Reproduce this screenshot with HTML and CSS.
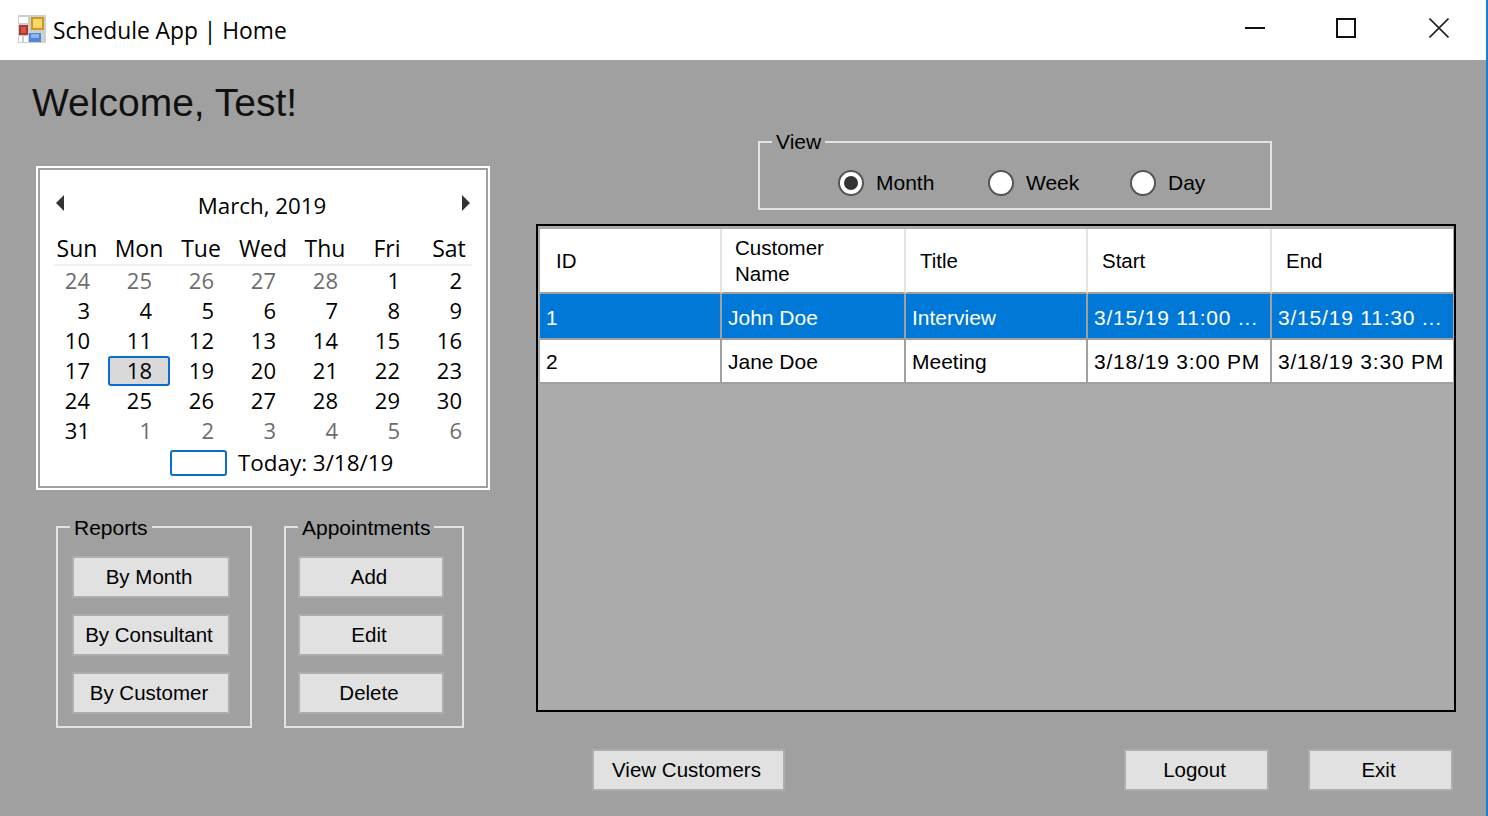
FILE: index.html
```html
<!DOCTYPE html>
<html lang="en">
<head>
  <meta charset="UTF-8">
  <meta name="viewport" content="width=device-width, initial-scale=1.0">
  <title>Schedule App | Home</title>
  <link rel="stylesheet" href="styles.css">
</head>
<body>
  <div class="window">
    <header class="titlebar">
      <svg class="app-icon" width="28" height="28" viewBox="0 0 28 28">
        <rect width="28" height="28" fill="#cfcfcf"/>
        <rect x="1" y="2" width="9" height="6" fill="#fff"/>
        <rect x="1" y="10" width="9" height="10" fill="#a83a32"/>
        <rect x="3" y="12" width="5" height="6" fill="#d8554c"/>
        <rect x="1" y="21" width="3" height="6" fill="#fff"/>
        <rect x="6" y="21" width="4" height="6" fill="#fff"/>
        <rect x="13" y="2" width="13" height="13" fill="#c99a1c"/>
        <rect x="15" y="4" width="9" height="9" fill="#f7d76a"/>
        <rect x="11" y="18" width="12" height="9" fill="#4f86d8"/>
        <rect x="13" y="19" width="8" height="4" fill="#8db4ee"/>
      </svg>
      <span class="app-title">Schedule App | Home</span>
      <div class="win-controls">
        <svg width="20" height="20" viewBox="0 0 20 20"><rect y="9" width="20" height="2" fill="#111"/></svg>
        <svg width="20" height="20" viewBox="0 0 20 20"><rect x="1" y="1" width="18" height="18" fill="none" stroke="#111" stroke-width="2"/></svg>
        <svg width="20" height="20" viewBox="0 0 20 20"><path d="M0.5 0.5L19.5 19.5M19.5 0.5L0.5 19.5" fill="none" stroke="#222" stroke-width="1.6"/></svg>
      </div>
    </header>

    <main class="client">
      <h1 class="welcome">Welcome, Test!</h1>
      <div class="columns">
        <section class="left-col">
          <div class="calendar">
            <div class="cal-inner">
              <div class="cal-nav">
                <span class="arrow arrow-left"></span>
                <span class="cal-month">March, 2019</span>
                <span class="arrow arrow-right"></span>
              </div>
              <div class="cal-head">
                <div class="cal-weekdays">
                  <span>Sun</span><span>Mon</span><span>Tue</span><span>Wed</span><span>Thu</span><span>Fri</span><span>Sat</span>
                </div>
              </div>
              <div class="cal-days">
                <span class="muted">24</span><span class="muted">25</span><span class="muted">26</span><span class="muted">27</span><span class="muted">28</span><span>1</span><span>2</span>
                <span>3</span><span>4</span><span>5</span><span>6</span><span>7</span><span>8</span><span>9</span>
                <span>10</span><span>11</span><span>12</span><span>13</span><span>14</span><span>15</span><span>16</span>
                <span>17</span><span class="selected">18</span><span>19</span><span>20</span><span>21</span><span>22</span><span>23</span>
                <span>24</span><span>25</span><span>26</span><span>27</span><span>28</span><span>29</span><span>30</span>
                <span>31</span><span class="muted">1</span><span class="muted">2</span><span class="muted">3</span><span class="muted">4</span><span class="muted">5</span><span class="muted">6</span>
              </div>
              <div class="cal-today">
                <span class="today-box"></span>
                <span class="today-text">Today: 3/18/19</span>
              </div>
            </div>
          </div>

          <div class="groups">
            <fieldset class="group group-reports">
              <legend>Reports</legend>
              <button class="btn">By Month</button>
              <button class="btn">By Consultant</button>
              <button class="btn">By Customer</button>
            </fieldset>
            <fieldset class="group group-appts">
              <legend>Appointments</legend>
              <button class="btn">Add</button>
              <button class="btn">Edit</button>
              <button class="btn">Delete</button>
            </fieldset>
          </div>
        </section>

        <section class="right-col">
          <fieldset class="group group-view">
            <legend>View</legend>
            <div class="radios">
              <label class="radio"><span class="dot checked"></span>Month</label>
              <label class="radio"><span class="dot"></span>Week</label>
              <label class="radio"><span class="dot"></span>Day</label>
            </div>
          </fieldset>

          <div class="grid-box">
            <table class="appts">
              <thead>
                <tr>
                  <th>ID</th>
                  <th>Customer<br>Name</th>
                  <th>Title</th>
                  <th>Start</th>
                  <th>End</th>
                </tr>
              </thead>
              <tbody>
                <tr class="active">
                  <td>1</td>
                  <td>John Doe</td>
                  <td>Interview</td>
                  <td class="date">3/15/19 11:00 ...</td>
                  <td class="date">3/15/19 11:30 ...</td>
                </tr>
                <tr>
                  <td>2</td>
                  <td>Jane Doe</td>
                  <td>Meeting</td>
                  <td class="date">3/18/19 3:00 PM</td>
                  <td class="date">3/18/19 3:30 PM</td>
                </tr>
              </tbody>
            </table>
          </div>

          <div class="bottom-bar">
            <button class="btn btn-customers">View Customers</button>
            <button class="btn btn-logout">Logout</button>
            <button class="btn btn-exit">Exit</button>
          </div>
        </section>
      </div>
    </main>
  </div>
</body>
</html>
```

FILE: styles.css
```css
* {
  margin: 0;
  padding: 0;
  box-sizing: border-box;
}

body {
  width: 1488px;
  height: 816px;
  overflow: hidden;
  font-family: "Liberation Sans", Arial, sans-serif;
  font-size: 21px;
  color: #000;
  background: #a0a0a0;
}

.window {
  display: flex;
  flex-direction: column;
  height: 816px;
  border-right: 2px solid #1a7fd4;
}

/* title bar */
.titlebar {
  display: flex;
  align-items: center;
  height: 60px;
  padding: 0 37px 0 18px;
  background: #fff;
}

.app-icon {
  margin-bottom: 2px;
}

.app-title {
  margin-left: 7px;
  font-family: "Open Sans", sans-serif;
  font-size: 22.8px;
}

.win-controls {
  display: flex;
  gap: 71px;
  margin-left: auto;
  margin-bottom: 4px;
}

.win-controls svg:last-child {
  margin-left: 2px;
}

/* client area */
.client {
  flex: 1;
  padding-top: 22px;
}

.welcome {
  height: 42px;
  margin: 0 0 6px 32px;
  font-size: 39px;
  font-weight: normal;
  line-height: 42px;
  color: #111;
}

.columns {
  display: flex;
}

.left-col {
  width: 536px;
  padding: 36px 0 0 36px;
}

.right-col {
  width: 920px;
}

/* calendar */
.calendar {
  width: 454px;
  height: 324px;
  border: 2px solid #fff;
  background: #fff;
  font-family: "Open Sans", sans-serif;
  font-size: 22px;
}

.cal-inner {
  height: 320px;
  padding: 0 6px;
  border: 2px solid #a0a0a0;
}

.cal-nav {
  display: flex;
  align-items: center;
  justify-content: space-between;
  height: 44px;
  margin: 12px 0 8px;
  padding: 0 10px;
}

.arrow {
  width: 0;
  height: 0;
  margin-bottom: 2px;
  border-top: 8px solid transparent;
  border-bottom: 8px solid transparent;
}

.arrow-left {
  border-right: 8px solid #333;
}

.arrow-right {
  border-left: 8px solid #333;
}

.cal-month {
  margin: 2px 2px 0 0;
  font-size: 22.3px;
}

.cal-head {
  margin: 0 8px;
  border-bottom: 2px solid #f0f0f0;
}

.cal-weekdays {
  display: grid;
  grid-template-columns: repeat(7, 62px);
  height: 30px;
  margin: 0 -8px;
  font-size: 23px;
  line-height: 28px;
  text-align: center;
}

.cal-days {
  display: grid;
  grid-template-columns: repeat(7, 62px);
  grid-auto-rows: 30px;
  line-height: 28px;
  text-align: right;
}

.cal-days span {
  padding-right: 18px;
}

.cal-days .muted {
  color: #6d6d6d;
}

.cal-days .selected {
  padding-right: 16px;
  line-height: 24px;
  border: 2px solid #0a6cd0;
  border-radius: 3px;
  background: #d9d9d9;
}

.cal-today {
  display: flex;
  align-items: center;
  gap: 11px;
  height: 26px;
  margin: 4px 0 0 124px;
}

.today-box {
  width: 57px;
  height: 26px;
  border: 2px solid #0a6cd0;
  border-radius: 3px;
}

.today-text {
  margin-bottom: 2px;
  font-size: 22.4px;
}

/* group boxes */
.groups {
  display: flex;
  gap: 32px;
  margin: 25px 0 0 20px;
}

.group {
  border: 2px solid #e3e3e3;
  min-width: 0;
}

.group legend {
  height: 24px;
  padding: 0 4px;
  line-height: 24px;
}

.group-reports {
  display: flex;
  flex-direction: column;
  gap: 16px;
  width: 196px;
  padding: 17px 20px 12px 14px;
}

.group-reports legend {
  margin-left: -2px;
  line-height: 26px;
}

.group-appts {
  display: flex;
  flex-direction: column;
  gap: 16px;
  width: 180px;
  padding: 17px 18px 12px 12px;
}

.group-appts legend {
  line-height: 26px;
}

.group-view {
  width: 514px;
  height: 80px;
  margin-left: 222px;
  padding: 16px 0 0 12px;
}

.radios {
  display: grid;
  grid-template-columns: 150px 142px auto;
  margin-left: 66px;
}

.radio {
  display: flex;
  align-items: center;
  gap: 12px;
  height: 26px;
}

.dot {
  display: flex;
  align-items: center;
  justify-content: center;
  width: 26px;
  height: 26px;
  border: 2px solid #555;
  border-radius: 50%;
  background: #fff;
}

.dot.checked::after {
  content: "";
  width: 14px;
  height: 14px;
  border-radius: 50%;
  background: #333;
}

/* buttons */
.btn {
  height: 42px;
  padding-right: 4px;
  border: 2px solid #adadad;
  background: #e1e1e1;
  font-family: inherit;
  font-size: 20.5px;
  color: #000;
}

/* appointments grid */
.grid-box {
  width: 920px;
  height: 488px;
  margin-top: 14px;
  padding: 3px 0 0 2px;
  border: 2px solid #000;
  background: #ababab;
}

.appts {
  width: 913px;
  table-layout: fixed;
  border-collapse: separate;
  border-spacing: 0;
  background: #fff;
}

.appts th,
.appts td {
  border-right: 2px solid #a0a0a0;
  border-bottom: 2px solid #a0a0a0;
  text-align: left;
  white-space: nowrap;
}

.appts th {
  height: 65px;
  padding-left: 14px;
  border-right-color: #e3e3e3;
  font-size: 20.5px;
  font-weight: normal;
  line-height: 26px;
}

.appts th:first-child {
  padding-left: 16px;
}

.appts th:nth-child(2) {
  padding-left: 13px;
}

.appts td {
  padding-left: 6px;
}

.appts th:nth-child(1),
.appts th:nth-child(3),
.appts td:nth-child(1),
.appts td:nth-child(3) {
  width: 182px;
}

.appts th:nth-child(2),
.appts th:nth-child(4),
.appts td:nth-child(2),
.appts td:nth-child(4) {
  width: 184px;
}

.appts th:last-child,
.appts td:last-child {
  border-right: 0;
}

.appts .active td {
  height: 46px;
  padding-top: 3px;
  background: #0078d7;
  color: #fff;
}

.appts tbody tr:last-child td {
  height: 44px;
  padding-top: 1px;
}

.appts .date {
  letter-spacing: 0.8px;
}

/* bottom row */
.bottom-bar {
  display: flex;
  padding: 37px 3px 0 56px;
}

.btn-customers {
  width: 193px;
}

.btn-logout {
  width: 145px;
  margin-left: auto;
}

.btn-exit {
  width: 145px;
  margin-left: 39px;
}
```
